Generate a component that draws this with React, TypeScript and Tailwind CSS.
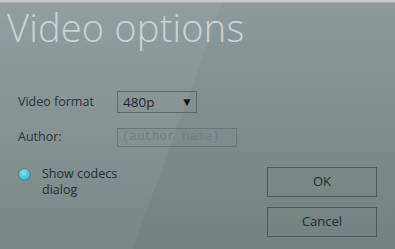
export default function App() {
	return (
		<div className="relative w-[395px] h-[249px] overflow-hidden bg-[linear-gradient(110deg,rgba(255,255,255,0.05)_46%,transparent_46%),linear-gradient(to_bottom,#8d9a9a,#738180)] font-['Open_Sans',sans-serif]">
			<div className="h-[3px] bg-[#c3c8c8] border-b border-[#a9b1b1]" />
			<h1 className="pl-[7px] mt-[2px] text-[38px] leading-[44px] font-light text-[#cbd4d4] tracking-[0.2px]">
				Video options
			</h1>

			<div className="mt-[42px] pl-[18px] flex flex-col gap-[15px] text-[12.5px] text-[#2a3232]">
				<div className="flex items-center">
					<span className="w-[99px]">Video format</span>
					<div className="w-[80px] h-[22px] border border-[#5d6868] flex items-center justify-between pl-[5px] pr-[3px] text-[13.5px] text-[#1f2626]">
						<span>480p</span>
						<span className="text-[12px] text-[#111616]">▼</span>
					</div>
				</div>
				<div className="flex items-center">
					<span className="w-[99px]">Author:</span>
					<div className="w-[120px] h-[19px] border border-[#6b7777] flex items-center pl-[4px] text-[12.5px] text-[#737f7f] font-['Liberation_Mono',monospace]">
						(author name)
					</div>
				</div>
			</div>

			<div className="mt-[19px] pl-[18px] pr-[18px] flex justify-between">
				<div className="flex items-start gap-[11px] text-[12.5px] leading-[16px] text-[#252d2d]">
					<div className="mt-[2px] w-[13px] h-[13px] rounded-full bg-[radial-gradient(circle_at_40%_35%,#7fe3f0,#3cb6cc_70%,#2a8ea2)] border border-[#4f7a82]" />
					<div>
						<div>Show codecs</div>
						<div>dialog</div>
					</div>
				</div>
				<div className="flex flex-col gap-[10px] mt-[1px]">
					<button className="w-[110px] h-[30px] border border-[#4d5858] text-[13px] text-[#222a2a]">
						OK
					</button>
					<button className="w-[110px] h-[30px] border border-[#4d5858] text-[13px] text-[#222a2a]">
						Cancel
					</button>
				</div>
			</div>
		</div>
	);
}
